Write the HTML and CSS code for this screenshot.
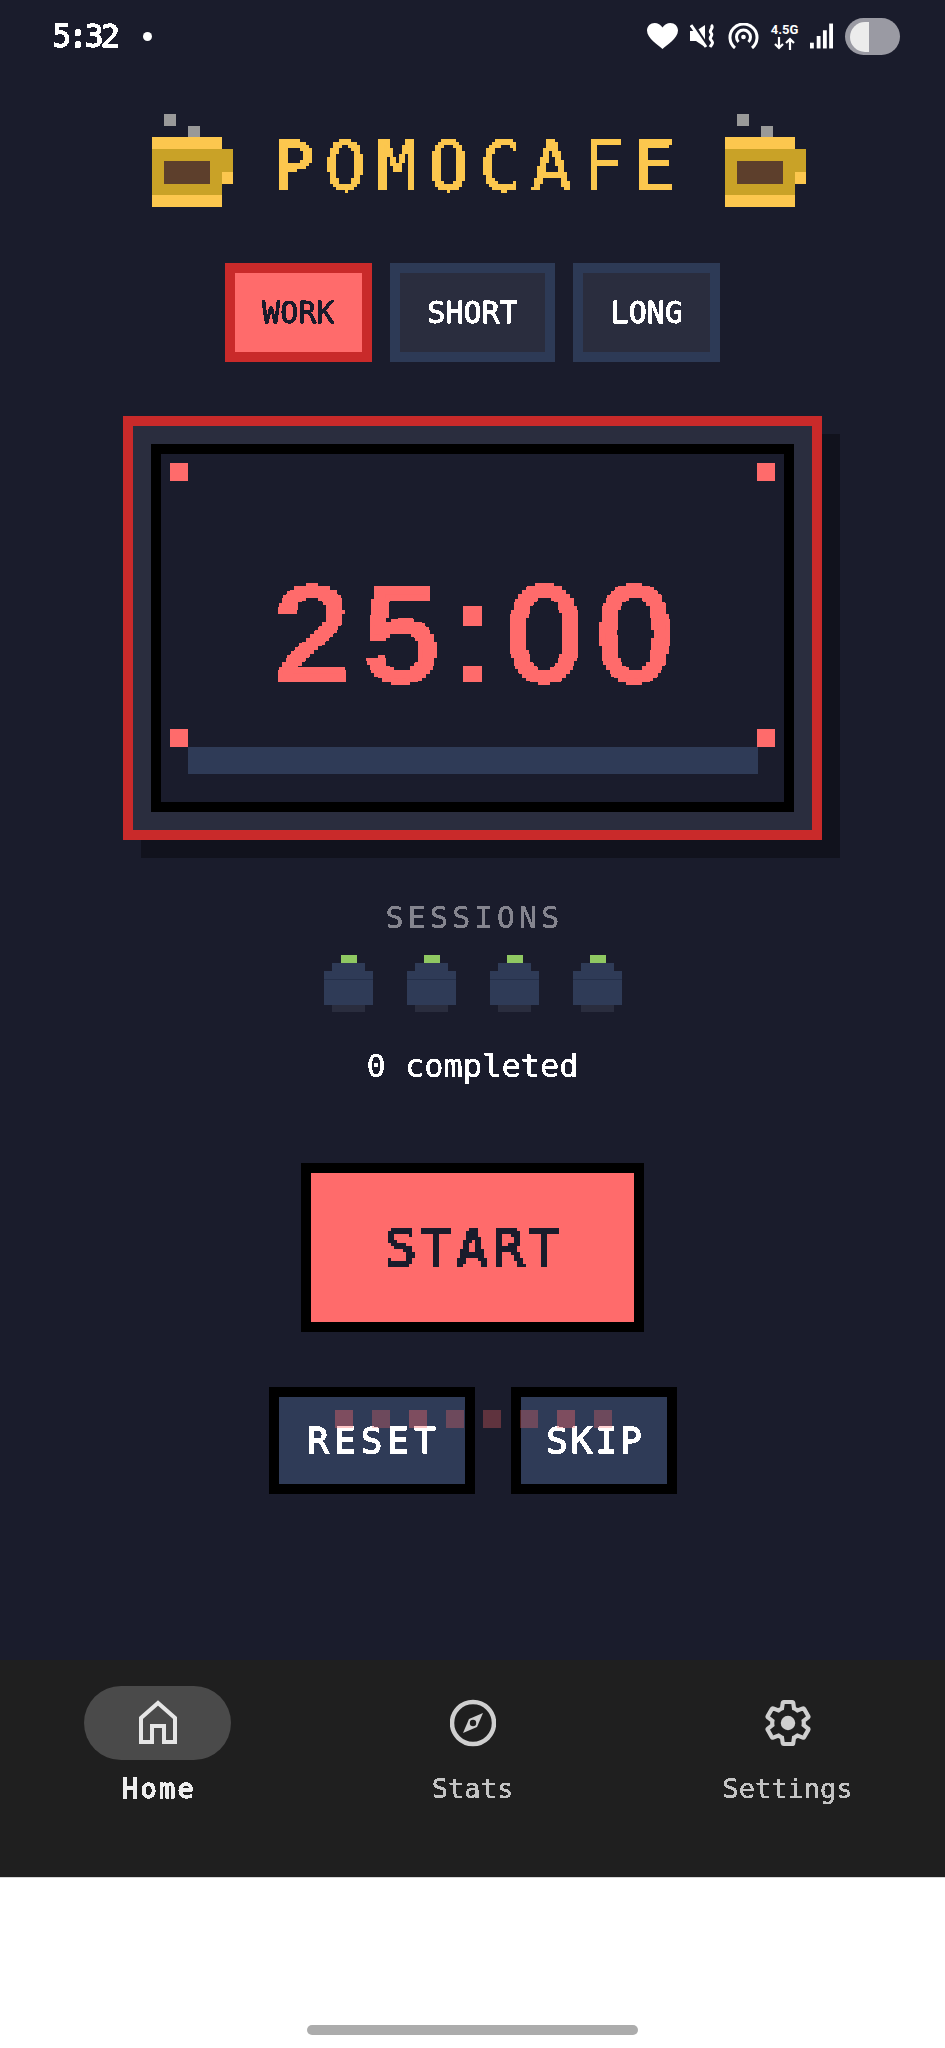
FILE: index.html
```html
<!DOCTYPE html>
<html lang="en">
<head>
<meta charset="utf-8">
<title>PomoCafe</title>
<link rel="stylesheet" href="styles.css">
</head>
<body>
<svg class="defs" width="0" height="0" aria-hidden="true">
  <filter id="px4" x="0" y="0" width="100%" height="100%" primitiveUnits="userSpaceOnUse" color-interpolation-filters="sRGB">
    <feFlood x="1" y="1" width="2" height="2" flood-color="#000"/>
    <feComposite width="4" height="4"/>
    <feTile result="a"/>
    <feComposite in="SourceGraphic" in2="a" operator="in"/>
    <feMorphology operator="dilate" radius="1"/>
    <feComponentTransfer><feFuncA type="discrete" tableValues="0 1 1 1"/></feComponentTransfer>
  </filter>
  <filter id="px3" x="0" y="0" width="100%" height="100%" primitiveUnits="userSpaceOnUse" color-interpolation-filters="sRGB">
    <feFlood x="1" y="1" width="1" height="1" flood-color="#000"/>
    <feComposite width="3" height="3"/>
    <feTile result="a"/>
    <feComposite in="SourceGraphic" in2="a" operator="in"/>
    <feMorphology operator="dilate" radius="1"/>
    <feComponentTransfer><feFuncA type="discrete" tableValues="0 1 1 1"/></feComponentTransfer>
  </filter>
  <filter id="crisp" x="0" y="0" width="100%" height="100%" color-interpolation-filters="sRGB">
    <feComponentTransfer><feFuncA type="discrete" tableValues="0 1 1 1"/></feComponentTransfer>
  </filter>
  <symbol id="mug" viewBox="0 0 82 93">
    <rect x="12" y="0" width="12" height="12" fill="#999"/>
    <rect x="36" y="12" width="12" height="11" fill="#999"/>
    <rect x="0" y="23" width="70" height="12" fill="#fcc74e"/>
    <rect x="0" y="35" width="70" height="46" fill="#c9a227"/>
    <rect x="0" y="81" width="70" height="12" fill="#fcc74e"/>
    <rect x="12" y="47" width="46" height="23" fill="#5d3f2c"/>
    <rect x="70" y="35" width="11" height="23" fill="#c9a227"/>
    <rect x="70" y="58" width="11" height="12" fill="#fcc74e"/>
  </symbol>
  <symbol id="tomato" viewBox="0 0 49 57">
    <rect x="17" y="0" width="16" height="8" fill="#8fc862"/>
    <rect x="8" y="8" width="33" height="8" fill="#2f3b57"/>
    <rect x="0" y="16" width="49" height="34" fill="#2f3b57"/>
    <rect x="0" y="24" width="49" height="1" fill="#25304a"/>
    <rect x="8" y="50" width="33" height="7" fill="#2a2d3e"/>
  </symbol>
</svg>

<div class="screen">
  <header class="status">
    <span class="time">5:32</span>
    <span class="status-dot"></span>
    <div class="status-icons">
      <svg class="ic-heart" viewBox="0 0 31 26"><path d="M15.5 26C12 22.6 0 15.6 0 7.6 0 3 3.6 0 7.6 0c3.2 0 6.3 1.7 7.9 4.6C17.100 1.700 20.200 0 23.400 0 27.400 0 31 3 31 7.600 31 15.600 19 22.600 15.500 26z" fill="#fff"/></svg>
      <svg class="ic-mute" viewBox="0 0 26 24" fill="none"><path d="M0 7h6l9-6v22l-9-6H0z" fill="#fff"/><path d="M3 0l14 22" stroke="#1a1c2c" stroke-width="3.500"/><path d="M1 1l15 22" stroke="#fff" stroke-width="3"/><path d="M21 1c4 3-3 5 0 8s-3 4 0 7 1 4-1 7" stroke="#fff" stroke-width="3"/></svg>
      <svg class="ic-spot" viewBox="0 0 31 26" fill="none" stroke="#fff" stroke-width="3"><path d="M7 25a13.500 13.500 0 1 1 17 0"/><path d="M10.500 19a7 7 0 1 1 10 0"/><circle cx="15.500" cy="14" r="1.600" fill="#fff" stroke-width="1.500"/></svg>
      <div class="net"><span class="net-label">4.5G</span><svg viewBox="0 0 27 13" fill="none" stroke="#fff" stroke-width="2.200"><path d="M8 0v11M4 7l4 4 4-4"/><path d="M19 13V2M15 6l4-4 4 4"/></svg></div>
      <svg class="ic-signal" viewBox="0 0 24 26" fill="#fff"><rect x="0" y="20" width="4" height="6"/><rect x="7" y="13" width="4" height="13"/><rect x="13.500" y="7" width="4" height="19"/><rect x="20" y="0" width="4" height="26"/></svg>
      <div class="toggle"><span class="toggle-knob"></span></div>
    </div>
  </header>

  <div class="brand">
    <svg class="mug"><use href="#mug"/></svg>
    <h1 class="title">POMOCAFE</h1>
    <svg class="mug"><use href="#mug"/></svg>
  </div>

  <div class="tabs">
    <button class="tab tab-on"><span class="crisp">WORK</span></button>
    <button class="tab"><span class="crisp">SHORT</span></button>
    <button class="tab"><span class="crisp">LONG</span></button>
  </div>

  <section class="card">
    <div class="panel">
      <i class="corner tl"></i><i class="corner tr"></i><i class="corner bl"></i><i class="corner br"></i>
      <div class="clock">25:00</div>
      <div class="bar"></div>
    </div>
  </section>

  <div class="sessions-label"><span class="crisp">SESSIONS</span></div>
  <div class="tomatoes">
    <svg class="tomato"><use href="#tomato"/></svg>
    <svg class="tomato"><use href="#tomato"/></svg>
    <svg class="tomato"><use href="#tomato"/></svg>
    <svg class="tomato"><use href="#tomato"/></svg>
  </div>
  <div class="completed"><span class="crisp">0 completed</span></div>

  <button class="start"><span class="start-text">START</span></button>

  <div class="secondary">
    <button class="sec sec-reset"><span class="crisp">RESET</span></button>
    <button class="sec sec-skip"><span class="crisp">SKIP</span></button>
    <div class="dots">
      <i class="dot hi"></i><i class="dot"></i><i class="dot hi"></i><i class="dot"></i><i class="dot"></i><i class="dot"></i><i class="dot hi"></i><i class="dot"></i>
    </div>
  </div>
</div>

<nav class="nav">
  <div class="nav-item nav-on">
    <div class="pill">
      <svg class="nav-ic" viewBox="0 0 46 48" fill="none" stroke="#e6e6e6" stroke-width="4"><path d="M6 43V19L23 4l17 15v24H29V27H17v16z"/></svg>
    </div>
    <span class="nav-label crisp">Home</span>
  </div>
  <div class="nav-item">
    <div class="pill">
      <svg class="nav-ic" viewBox="0 0 46 48"><circle cx="23" cy="24" r="21" fill="none" stroke="#cfcfcf" stroke-width="4.500"/><path d="M33 14l-6 14-14 6 6-14z" fill="#cfcfcf"/><circle cx="23" cy="24" r="3.200" fill="#1f1f1f"/></svg>
    </div>
    <span class="nav-label crisp">Stats</span>
  </div>
  <div class="nav-item">
    <div class="pill">
      <svg class="nav-ic" viewBox="1.500 1.500 21 21"><path fill="none" stroke="#cfcfcf" stroke-width="1.900" d="M19.140 12.940c.04-.3.06-.61.06-.94 0-.32-.02-.64-.07-.94l2.030-1.580c.18-.14.23-.41.12-.61l-1.920-3.320c-.12-.22-.37-.29-.59-.22l-2.390.96c-.5-.38-1.030-.7-1.620-.94l-.36-2.540c-.04-.24-.24-.41-.48-.41h-3.840c-.24 0-.43.17-.47.41l-.36 2.540c-.59.24-1.130.57-1.620.94l-2.390-.96c-.22-.08-.47 0-.59.22L2.740 8.870c-.12.21-.08.47.12.61l2.030 1.580c-.05.3-.09.63-.09.94s.02.64.07.94l-2.030 1.580c-.18.14-.23.41-.12.61l1.920 3.320c.12.22.37.29.59.22l2.390-.96c.5.38 1.030.7 1.620.94l.36 2.540c.05.24.24.41.48.41h3.840c.24 0 .44-.17.47-.41l.36-2.540c.59-.24 1.130-.56 1.620-.94l2.390.96c.22.08.47 0 .59-.22l1.920-3.320c.12-.22.07-.47-.12-.61l-2.010-1.580z"/><circle cx="12" cy="12" r="3.300" fill="#cfcfcf"/></svg>
    </div>
    <span class="nav-label crisp">Settings</span>
  </div>
</nav>

<div class="gesture-area"><span class="gesture-bar"></span></div>
</body>
</html>
```

FILE: styles.css
```css
* { box-sizing: border-box; }
html, body { margin: 0; padding: 0; }
body {
  width: 945px;
  height: 2048px;
  overflow: hidden;
  background: #fff;
  font-family: "DejaVu Sans Mono", "Liberation Mono", monospace;
}
.defs { position: absolute; }
.crisp { display: inline-block; filter: url(#crisp); }

.screen {
  height: 1660px;
  background: #1a1c2c;
  display: flex;
  flex-direction: column;
  align-items: center;
}

/* status bar */
.status {
  width: 100%;
  height: 72px;
  display: flex;
  align-items: center;
  padding: 0 45px 0 52px;
  color: #fff;
}
.time {
  font-size: 32px;
  line-height: 40px;
  letter-spacing: -3px;
  -webkit-text-stroke: 0.8px #fff;
  filter: url(#crisp);
}
.status-dot {
  width: 9px;
  height: 9px;
  border-radius: 50%;
  background: #fff;
  margin-left: 26px;
}
.status-icons {
  margin-left: auto;
  display: flex;
  align-items: center;
  gap: 12px;
}
.ic-heart { width: 31px; height: 26px; }
.ic-mute { width: 26px; height: 24px; }
.ic-spot { width: 31px; height: 26px; }
.ic-signal { width: 23px; height: 26px; }
.net {
  width: 27px;
  height: 27px;
  display: flex;
  flex-direction: column;
  align-items: center;
  overflow: visible;
}
.net-label {
  font: 700 13px/14px Roboto, "Liberation Sans", sans-serif;
  white-space: nowrap;
}
.net svg { width: 27px; height: 13px; }
.toggle {
  width: 55px;
  height: 37px;
  border-radius: 19px;
  background: #9a9aa3;
  padding: 4px 0 3px 5px;
}
.toggle-knob {
  display: block;
  width: 19px;
  height: 30px;
  border-radius: 15px 0 0 15px;
  background: #ececec;
}

/* brand */
.brand {
  margin-top: 42px;
  padding-left: 14px;
  display: flex;
  align-items: flex-start;
  gap: 39px;
}
.mug { width: 82px; height: 93px; display: block; }
.title {
  margin: 13px 0 0;
  font-size: 68px;
  line-height: 80px;
  font-weight: 400;
  letter-spacing: 10.600px;
  color: #fcc74e;
  -webkit-text-stroke: 0.8px #fcc74e;
  filter: url(#px3);
}

/* tabs */
.tabs {
  margin-top: 56px;
  display: flex;
  gap: 18px;
}
.tab {
  height: 99px;
  padding: 0 27.500px;
  border: 10px solid #2d3a56;
  background: #2a2d3e;
  color: #fff;
  font: 400 30px/1 "DejaVu Sans Mono", monospace;
  -webkit-text-stroke: 0.5px currentColor;
}
.tab-on {
  border-color: #c92a2a;
  background: #ff6b6b;
  color: #1a1c2c;
}

/* timer card */
.card {
  margin-top: 54px;
  width: 699px;
  height: 424px;
  padding: 18px;
  border: 10px solid #c92a2a;
  background: #2a2d3e;
  box-shadow: 18px 18px 0 #11121d;
}
.panel {
  position: relative;
  height: 100%;
  border: 10px solid #000;
  background: #1a1c2c;
  display: flex;
  flex-direction: column;
  align-items: center;
}
.corner {
  position: absolute;
  width: 18px;
  height: 18px;
  background: #ff6b6b;
}
.tl { left: 9px; top: 9px; }
.tr { right: 9px; top: 9px; }
.bl { left: 9px; bottom: 55px; }
.br { right: 9px; bottom: 55px; }
.clock {
  margin-top: 100px;
  height: 160px;
  font: 400 136px/160px "Liberation Sans", Arial, sans-serif;
  letter-spacing: 14.500px;
  padding-left: 16px;
  color: #ff6b6b;
  -webkit-text-stroke: 4px #ff6b6b;
  filter: url(#px4);
}
.bar {
  margin-top: auto;
  margin-bottom: 28px;
  width: 570px;
  height: 27px;
  background: #2f3b57;
}

/* sessions */
.sessions-label {
  margin-top: 63px;
  font-size: 30px;
  line-height: 30px;
  letter-spacing: 4.200px;
  padding-left: 4px;
  color: #85858f;
}
.tomatoes {
  margin-top: 22px;
  display: flex;
  gap: 34px;
}
.tomato { width: 49px; height: 57px; display: block; }
.completed {
  margin-top: 34px;
  font-size: 32px;
  line-height: 40px;
  color: #fff;
}

/* controls */
.start {
  margin-top: 77px;
  width: 343px;
  height: 169px;
  padding: 0 0 0 4px;
  border: 10px solid #000;
  background: #ff6b6b;
  color: #1a1c2c;
  font: 400 52px/1 "DejaVu Sans Mono", monospace;
  letter-spacing: 4.500px;
}
.start-text {
  display: inline-block;
  -webkit-text-stroke: 1.500px #1a1c2c;
  filter: url(#px3);
}
.secondary {
  position: relative;
  margin-top: 55px;
  display: flex;
  gap: 36px;
}
.sec {
  height: 107px;
  padding: 0 0 0 5px;
  border: 10px solid #000;
  background: #2f3b57;
  color: #fff;
  font: 400 36px/1 "DejaVu Sans Mono", monospace;
  letter-spacing: 5px;
  -webkit-text-stroke: 0.8px #fff;
}
.sec-reset { width: 206px; }
.sec-skip { width: 166px; padding-left: 4px; letter-spacing: 3px; }
.dots {
  position: absolute;
  left: 66px;
  top: 23px;
  display: flex;
  gap: 19px;
}
.dot {
  width: 18px;
  height: 18px;
  background: #ff6b6b;
  opacity: 0.3;
}
.dot.hi { opacity: 0.38; }

/* navigation */
.nav {
  height: 218px;
  background: #1f1f1f;
  border-bottom: 1px solid #d6d6d6;
  display: grid;
  grid-template-columns: repeat(3, 1fr);
  padding-top: 26px;
}
.nav-item {
  display: flex;
  flex-direction: column;
  align-items: center;
  color: #c4c4c4;
}
.pill {
  width: 147px;
  height: 74px;
  border-radius: 37px;
  display: flex;
  align-items: center;
  justify-content: center;
}
.nav-on .pill { background: #4a4a4a; }
.nav-ic { width: 46px; height: 48px; display: block; }
.nav-label {
  margin-top: 12px;
  font-size: 27px;
  line-height: 34px;
}
.nav-on .nav-label {
  color: #eee;
  letter-spacing: 2.200px;
  padding-left: 3px;
  -webkit-text-stroke: 0.8px #eee;
}

/* gesture area */
.gesture-area {
  height: 170px;
  background: #fff;
  display: flex;
  justify-content: center;
  align-items: flex-start;
  padding-top: 147px;
}
.gesture-bar {
  width: 331px;
  height: 10px;
  border-radius: 5px;
  background: #acacac;
}
```
